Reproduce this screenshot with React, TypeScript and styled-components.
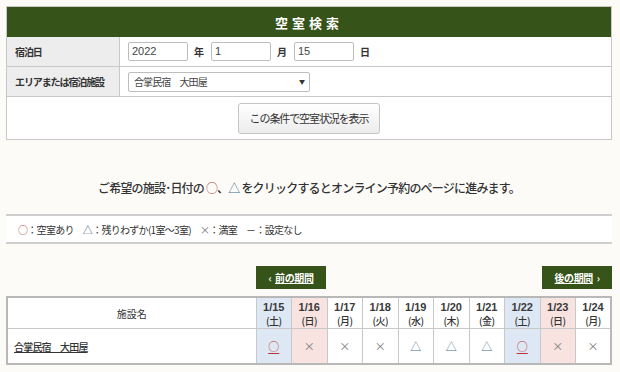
import React from 'react';
import styled, {createGlobalStyle} from "styled-components";

const GlobalStyle = createGlobalStyle`
    body {
        margin: 0;
        background: #fcfbf8;
        font-family: "Noto Sans CJK JP", "Liberation Sans", sans-serif;
        color: #333;
    }
`

type Mark = 'o' | 't' | 'x';
type Day = { date: string; week: string; tone?: 'sat' | 'sun'; mark: Mark };

const days: Day[] = [
    {date: '1/15', week: '(土)', tone: 'sat', mark: 'o'},
    {date: '1/16', week: '(日)', tone: 'sun', mark: 'x'},
    {date: '1/17', week: '(月)', mark: 'x'},
    {date: '1/18', week: '(火)', mark: 'x'},
    {date: '1/19', week: '(水)', mark: 't'},
    {date: '1/20', week: '(木)', mark: 't'},
    {date: '1/21', week: '(金)', mark: 't'},
    {date: '1/22', week: '(土)', tone: 'sat', mark: 'o'},
    {date: '1/23', week: '(日)', tone: 'sun', mark: 'x'},
    {date: '1/24', week: '(月)', mark: 'x'},
];

export default function App() {
    return (
        <Page>
            <GlobalStyle/>
            <Panel>
                <PanelTitle>空室検索</PanelTitle>
                <FormRow>
                    <Label>宿泊日</Label>
                    <Field>
                        <TextBox>2022</TextBox>
                        <Unit>年</Unit>
                        <TextBox>1</TextBox>
                        <Unit>月</Unit>
                        <TextBox>15</TextBox>
                        <Unit>日</Unit>
                    </Field>
                </FormRow>
                <FormRow>
                    <Label>エリアまたは宿泊施設</Label>
                    <Field>
                        <SelectBox>
                            <span>合掌民宿　大田屋</span>
                            <Caret>▼</Caret>
                        </SelectBox>
                    </Field>
                </FormRow>
                <ButtonRow>
                    <SubmitButton>この条件で空室状況を表示</SubmitButton>
                </ButtonRow>
            </Panel>

            <Lead>
                ご希望の施設･日付の&nbsp;<Circle>○</Circle>、<Triangle>△</Triangle>&nbsp;をクリックするとオンライン予約のページに進みます。
            </Lead>

            <Legend>
                <LegendItem><Circle>○</Circle>：空室あり</LegendItem>
                <LegendItem><Triangle>△</Triangle>：残りわずか(1室～3室)</LegendItem>
                <LegendItem><Cross>×</Cross>：満室</LegendItem>
                <LegendItem>－：設定なし</LegendItem>
            </Legend>

            <NavRow>
                <NavButton>‹&nbsp;&nbsp;<u>前の期間</u></NavButton>
                <NavButton><u>後の期間</u>&nbsp;&nbsp;›</NavButton>
            </NavRow>

            <Table>
                <colgroup>
                    <col style={{width: 249}}/>
                    {days.map(d => <col key={d.date}/>)}
                </colgroup>
                <thead>
                <tr>
                    <NameHead>施設名</NameHead>
                    {days.map(d => (
                        <DateHead key={d.date} $tone={d.tone}>
                            <DateNum>{d.date}</DateNum>
                            <WeekDay>{d.week}</WeekDay>
                        </DateHead>
                    ))}
                </tr>
                </thead>
                <tbody>
                <tr>
                    <NameCell><a>合掌民宿　大田屋</a></NameCell>
                    {days.map(d => (
                        <MarkCell key={d.date} $tone={d.tone}>
                            {d.mark === 'o' && <CircleLink>○</CircleLink>}
                            {d.mark === 't' && <Triangle>△</Triangle>}
                            {d.mark === 'x' && <Cross>×</Cross>}
                        </MarkCell>
                    ))}
                </tr>
                </tbody>
            </Table>
        </Page>
    );
}

const Page = styled.div`
    padding: 6px 8px 12px 6px;
`

const Panel = styled.div`
    border: 1px solid #c8c8c8;
    background: #fff;
`

const PanelTitle = styled.div`
    height: 30px;
    background: #36531a;
    color: #fff;
    font-weight: bold;
    font-size: 13px;
    letter-spacing: 4px;
    display: flex;
    align-items: center;
    justify-content: center;
`

const FormRow = styled.div`
    display: flex;
    border-bottom: 1px solid #c8c8c8;
    height: 29px;
`

const Label = styled.div`
    width: 104px;
    padding-left: 8px;
    background: #ededed;
    border-right: 1px solid #c8c8c8;
    font-size: 10px;
    letter-spacing: -1.1px;
    font-weight: bold;
    white-space: nowrap;
    display: flex;
    align-items: center;
`

const Field = styled.div`
    display: flex;
    align-items: center;
    padding-left: 8px;
`

const TextBox = styled.div`
    width: 52px;
    height: 17px;
    padding: 0 3px;
    border: 1px solid #bdbdbd;
    border-radius: 2px;
    font-family: "Liberation Sans", sans-serif;
    font-size: 11px;
    line-height: 17px;
    color: #444;
`

const Unit = styled.span`
    font-size: 10px;
    font-weight: bold;
    margin: 0 7px 0 6px;
`

const SelectBox = styled.div`
    width: 170px;
    height: 18px;
    padding: 0 5px;
    border: 1px solid #bdbdbd;
    border-radius: 2px;
    font-size: 10px;
    letter-spacing: -0.9px;
    color: #444;
    display: flex;
    align-items: center;
    justify-content: space-between;
`

const Caret = styled.span`
    font-size: 6px;
    color: #333;
`

const ButtonRow = styled.div`
    height: 42px;
    display: flex;
    align-items: center;
    justify-content: center;
`

const SubmitButton = styled.button`
    width: 142px;
    height: 31px;
    border: 1px solid #c4c4c4;
    border-radius: 3px;
    background: linear-gradient(#ffffff, #ececec);
    font-family: "Noto Sans CJK JP", sans-serif;
    font-size: 11px;
    letter-spacing: -1.1px;
    white-space: nowrap;
    color: #333;
    padding: 0;
`

const Lead = styled.p`
    margin: 39px 0 0;
    text-align: center;
    font-size: 12px;
    letter-spacing: -0.8px;
    font-weight: 500;
    line-height: 17px;
`

const Circle = styled.span`
    color: #b84545;
    font-weight: normal;
`

const CircleLink = styled.span`
    color: #c03030;
    text-decoration: underline;
    text-underline-offset: 2px;
`

const Triangle = styled.span`
    color: #3f6f8f;
    font-weight: normal;
`

const Cross = styled.span`
    color: #777;
`

const Legend = styled.div`
    margin-top: 18px;
    height: 26px;
    border-top: 2px solid #cfcfcf;
    border-bottom: 2px solid #cfcfcf;
    background: #fff;
    display: flex;
    align-items: center;
    gap: 9px;
    padding-left: 12px;
    font-size: 10px;
    letter-spacing: -0.7px;
`

const LegendItem = styled.span`
    white-space: nowrap;
`

const NavRow = styled.div`
    display: flex;
    justify-content: space-between;
    margin: 22px 0 7px 250px;
`

const NavButton = styled.div`
    width: 70px;
    height: 23px;
    background: #36531a;
    color: #fff;
    font-size: 10px;
    font-weight: bold;
    letter-spacing: -0.4px;
    display: flex;
    align-items: center;
    justify-content: center;
`

const Table = styled.table`
    width: 100%;
    border-collapse: collapse;
    table-layout: fixed;
    border: 2px solid #b8b8b8;
    background: #fff;
`

const toneBg = (tone?: 'sat' | 'sun') =>
    tone === 'sat' ? '#dde8f4' : tone === 'sun' ? '#f8e3e1' : '#fff';

const NameHead = styled.th`
    height: 28px;
    border: 1px solid #c8c8c8;
    font-size: 10px;
    font-weight: normal;
`

const DateHead = styled.th<{ $tone?: 'sat' | 'sun' }>`
    border: 1px solid #c8c8c8;
    background: ${p => toneBg(p.$tone)};
    font-weight: normal;
    padding: 1px 0 0;
`

const DateNum = styled.div`
    font-family: "Liberation Sans", sans-serif;
    font-size: 11px;
    font-weight: bold;
    line-height: 14px;
    color: #3a3a3a;
`

const WeekDay = styled.div`
    font-size: 10px;
    font-weight: 500;
    line-height: 14px;
    letter-spacing: -0.5px;
    white-space: nowrap;
`

const NameCell = styled.td`
    height: 32px;
    border: 1px solid #c8c8c8;
    padding-left: 6px;
    font-size: 10px;
    letter-spacing: -0.8px;
    font-weight: 500;
    a {
        text-decoration: underline;
        color: #333;
    }
`

const MarkCell = styled.td<{ $tone?: 'sat' | 'sun' }>`
    border: 1px solid #c8c8c8;
    background: ${p => toneBg(p.$tone)};
    text-align: center;
    font-size: 11px;
`
